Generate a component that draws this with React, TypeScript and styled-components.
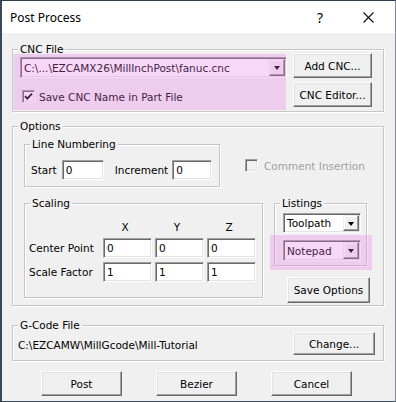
import React from 'react';
import styled, { createGlobalStyle } from 'styled-components';

const GlobalStyle = createGlobalStyle`
  html, body { margin: 0; padding: 0; background: #f0f0f0; }
  body {
    font-family: "DejaVu Sans", "Liberation Sans", sans-serif;
    font-size: 10.5px;
    color: #000;
  }
  * { box-sizing: border-box; }
`;

const Window = styled.div`
  width: 396px;
  height: 402px;
  background: #f0f0f0;
  border-top: 1px solid #2f3d4a;
  border-left: 2px solid #3b4855;
  border-right: 1px solid #7d8b97;
  border-bottom: 1px solid #3b4855;
  display: flex;
  flex-direction: column;
  overflow: hidden;
`;

const TitleBar = styled.div`
  height: 32px;
  flex: none;
  background: #fff;
  display: flex;
  align-items: center;
  padding: 0 3px 0 8px;
`;

const Title = styled.div`
  flex: 1;
  font-family: "Noto Sans", "Liberation Sans", sans-serif;
  font-size: 12px;
  color: #000;
`;

const CaptionButton = styled.div`
  width: 48px;
  height: 32px;
  display: flex;
  align-items: center;
  justify-content: center;
  font-family: "Noto Sans", "Liberation Sans", sans-serif;
  font-size: 14px;
  color: #000;
`;

const Body = styled.div`
  flex: 1;
  display: flex;
  flex-direction: column;
  padding: 16px 11px 0 10px;
`;

const Group = styled.div<{ $mt?: number; $w?: number; $h: number }>`
  position: relative;
  flex: none;
  margin-top: ${(p) => p.$mt ?? 0}px;
  width: ${(p) => (p.$w ? `${p.$w}px` : 'auto')};
  height: ${(p) => p.$h}px;
  border: 1px solid #c6c6c6;
  box-shadow: inset 1px 1px 0 #fff, 1px 1px 0 #fff;
`;

const Legend = styled.span`
  position: absolute;
  top: -7px;
  left: 5px;
  padding: 0 2px;
  background: #f0f0f0;
  line-height: 13px;
  white-space: nowrap;
`;

const Highlight = styled.div<{ $l: number; $t: number; $w: number; $h: number }>`
  position: absolute;
  left: ${(p) => p.$l}px;
  top: ${(p) => p.$t}px;
  width: ${(p) => p.$w}px;
  height: ${(p) => p.$h}px;
  background: rgba(230, 110, 230, 0.28);
  pointer-events: none;
`;

const Button = styled.div<{ $w: number; $h?: number }>`
  flex: none;
  width: ${(p) => p.$w}px;
  height: ${(p) => p.$h ?? 25}px;
  display: flex;
  align-items: center;
  justify-content: center;
  background: #f0f0f0;
  border: 1px solid;
  border-color: #fff #696969 #696969 #fff;
  box-shadow: inset -1px -1px 0 #a0a0a0, inset 1px 1px 0 #e3e3e3;
  white-space: nowrap;
`;

const Sunken = styled.div<{ $w: number; $h?: number }>`
  flex: none;
  width: ${(p) => p.$w}px;
  height: ${(p) => p.$h ?? 20}px;
  background: #fff;
  border: 1px solid;
  border-color: #a0a0a0 #fff #fff #a0a0a0;
  box-shadow: inset 1px 1px 0 #696969, inset -1px -1px 0 #e3e3e3;
`;

const TextInput = styled(Sunken)`
  display: flex;
  align-items: center;
  padding: 0 3px;
  white-space: nowrap;
`;

const ComboFrame = styled(Sunken)`
  display: flex;
  padding: 1px;
`;

const ComboText = styled.div`
  flex: 1;
  display: flex;
  align-items: center;
  padding-left: 2px;
  white-space: nowrap;
  overflow: hidden;
`;

const DropButton = styled.div`
  flex: none;
  width: 16px;
  display: flex;
  align-items: center;
  justify-content: center;
  background: #f0f0f0;
  border: 1px solid;
  border-color: #f0f0f0 #696969 #696969 #f0f0f0;
  box-shadow: inset -1px -1px 0 #a0a0a0, inset 1px 1px 0 #fff;
  &::after {
    content: '';
    width: 0;
    height: 0;
    border-left: 3.5px solid transparent;
    border-right: 3.5px solid transparent;
    border-top: 4px solid #000;
    margin-top: 1px;
  }
`;

const CheckRow = styled.div<{ $mt?: number; $ml?: number }>`
  display: flex;
  align-items: center;
  gap: 4px;
  height: 13px;
  margin-top: ${(p) => p.$mt ?? 0}px;
  margin-left: ${(p) => p.$ml ?? 0}px;
`;

const CheckBox = styled.div<{ $disabled?: boolean }>`
  flex: none;
  width: 13px;
  height: 13px;
  background: ${(p) => (p.$disabled ? '#f0f0f0' : '#fff')};
  border: 1px solid;
  border-color: #a0a0a0 #fff #fff #a0a0a0;
  box-shadow: inset 1px 1px 0 #696969, inset -1px -1px 0 #e3e3e3;
  display: flex;
  align-items: center;
  justify-content: center;
`;

const CheckLabel = styled.span<{ $disabled?: boolean }>`
  color: ${(p) => (p.$disabled ? '#a0a0a0' : '#000')};
  white-space: nowrap;
  margin-left: ${(p) => (p.$disabled ? 2 : 0)}px;
`;

/* CNC File */
const CncContent = styled.div`
  display: flex;
  gap: 6px;
  padding: 3px 11px 0 7px;
`;

const CncLeft = styled.div`
  flex: 1;
  display: flex;
  flex-direction: column;
  padding-top: 4px;
`;

const ButtonColumn = styled.div`
  display: flex;
  flex-direction: column;
  gap: 4px;
`;

/* Options */
const OptionsContent = styled.div`
  display: flex;
  flex-direction: column;
  padding: 17px 11px 0 11px;
`;

const OptionsRow = styled.div<{ $mt?: number }>`
  display: flex;
  align-items: flex-start;
  margin-top: ${(p) => p.$mt ?? 0}px;
`;

const LineNumContent = styled.div`
  display: flex;
  align-items: center;
  padding: 15px 0 0 6px;
`;

const FieldLabel = styled.span<{ $ml?: number; $mr?: number }>`
  white-space: nowrap;
  margin-left: ${(p) => p.$ml ?? 0}px;
  margin-right: ${(p) => p.$mr ?? 0}px;
`;

const ScalingGrid = styled.div`
  display: grid;
  grid-template-columns: 71px 49px 49px 49px;
  grid-template-rows: 13px 20px 20px;
  column-gap: 3px;
  row-gap: 4px;
  padding: 17px 0 0 4px;
`;

const AxisLabel = styled.span`
  text-align: center;
  line-height: 13px;
  padding-right: 5px;
`;

const RowLabel = styled.span`
  align-self: center;
  white-space: nowrap;
`;

const RightColumn = styled.div`
  position: relative;
  width: 96px;
  margin-left: 11px;
  display: flex;
  flex-direction: column;
  align-items: flex-start;
`;

const ListingsContent = styled.div`
  display: flex;
  flex-direction: column;
  gap: 7px;
  padding: 9px 5px 0 8px;
`;

const SaveButton = styled(Button)`
  align-self: flex-end;
  margin-top: 11px;
`;

/* G-Code */
const GCodeContent = styled.div`
  display: flex;
  align-items: center;
  height: 100%;
  padding: 5px 8px 4px 5px;
`;

const PathText = styled.div`
  flex: 1;
  padding-top: 3px;
  white-space: nowrap;
`;

const ButtonBar = styled.div`
  display: flex;
  gap: 34px;
  margin-top: 10px;
  padding-left: 29px;
`;

const Check = () => (
  <svg width="9" height="9" viewBox="0 0 9 9">
    <path d="M1 4.2 L3.3 6.6 L8 1.6" fill="none" stroke="#000" strokeWidth="1.8" />
  </svg>
);

const Combo = ({ w, h, text }: { w: number; h?: number; text: string }) => (
  <ComboFrame $w={w} $h={h}>
    <ComboText>{text}</ComboText>
    <DropButton />
  </ComboFrame>
);

export default function App() {
  return (
    <>
      <GlobalStyle />
      <Window>
        <TitleBar>
          <Title>Post Process</Title>
          <CaptionButton>?</CaptionButton>
          <CaptionButton>
            <svg width="11" height="11" viewBox="0 0 11 11">
              <path d="M0.5 0.5 L10.5 10.5 M10.5 0.5 L0.5 10.5" stroke="#111" strokeWidth="1.1" />
            </svg>
          </CaptionButton>
        </TitleBar>
        <Body>
          <Group $h={63}>
            <Legend>CNC File</Legend>
            <CncContent>
              <CncLeft>
                <Combo w={267} h={21} text={'C:\\...\\EZCAMX26\\MillInchPost\\fanuc.cnc'} />
                <CheckRow $mt={12} $ml={2}>
                  <CheckBox>
                    <Check />
                  </CheckBox>
                  <CheckLabel>Save CNC Name in Part File</CheckLabel>
                </CheckRow>
              </CncLeft>
              <ButtonColumn>
                <Button $w={79}>Add CNC...</Button>
                <Button $w={79}>CNC Editor...</Button>
              </ButtonColumn>
            </CncContent>
            <Highlight $l={0} $t={4} $w={273} $h={56} />
          </Group>

          <Group $mt={14} $h={180}>
            <Legend>Options</Legend>
            <OptionsContent>
              <OptionsRow>
                <Group $w={196} $h={43}>
                  <Legend>Line Numbering</Legend>
                  <LineNumContent>
                    <FieldLabel $mr={5}>Start</FieldLabel>
                    <TextInput $w={42}>0</TextInput>
                    <FieldLabel $ml={11} $mr={4}>Increment</FieldLabel>
                    <TextInput $w={40}>0</TextInput>
                  </LineNumContent>
                </Group>
                <CheckRow $mt={15} $ml={25}>
                  <CheckBox $disabled />
                  <CheckLabel $disabled>Comment Insertion</CheckLabel>
                </CheckRow>
              </OptionsRow>
              <OptionsRow $mt={16}>
                <Group $w={239} $h={95}>
                  <Legend>Scaling</Legend>
                  <ScalingGrid>
                    <span />
                    <AxisLabel>X</AxisLabel>
                    <AxisLabel>Y</AxisLabel>
                    <AxisLabel>Z</AxisLabel>
                    <RowLabel>Center Point</RowLabel>
                    <TextInput $w={49}>0</TextInput>
                    <TextInput $w={49}>0</TextInput>
                    <TextInput $w={49}>0</TextInput>
                    <RowLabel>Scale Factor</RowLabel>
                    <TextInput $w={49}>1</TextInput>
                    <TextInput $w={49}>1</TextInput>
                    <TextInput $w={49}>1</TextInput>
                  </ScalingGrid>
                </Group>
                <RightColumn>
                  <Group $w={93} $h={63}>
                    <Legend>Listings</Legend>
                    <ListingsContent>
                      <Combo w={78} text="Toolpath" />
                      <Combo w={78} h={21} text="Notepad" />
                    </ListingsContent>
                  </Group>
                  <SaveButton $w={83} $h={26}>Save Options</SaveButton>
                  <Highlight $l={-4} $t={32} $w={102} $h={35} />
                </RightColumn>
              </OptionsRow>
            </OptionsContent>
          </Group>

          <Group $mt={19} $h={36}>
            <Legend>G-Code File</Legend>
            <GCodeContent>
              <PathText>{'C:\\EZCAMW\\MillGcode\\Mill-Tutorial'}</PathText>
              <Button $w={82} $h={23}>Change...</Button>
            </GCodeContent>
          </Group>

          <ButtonBar>
            <Button $w={81}>Post</Button>
            <Button $w={81}>Bezier</Button>
            <Button $w={81}>Cancel</Button>
          </ButtonBar>
        </Body>
      </Window>
    </>
  );
}
